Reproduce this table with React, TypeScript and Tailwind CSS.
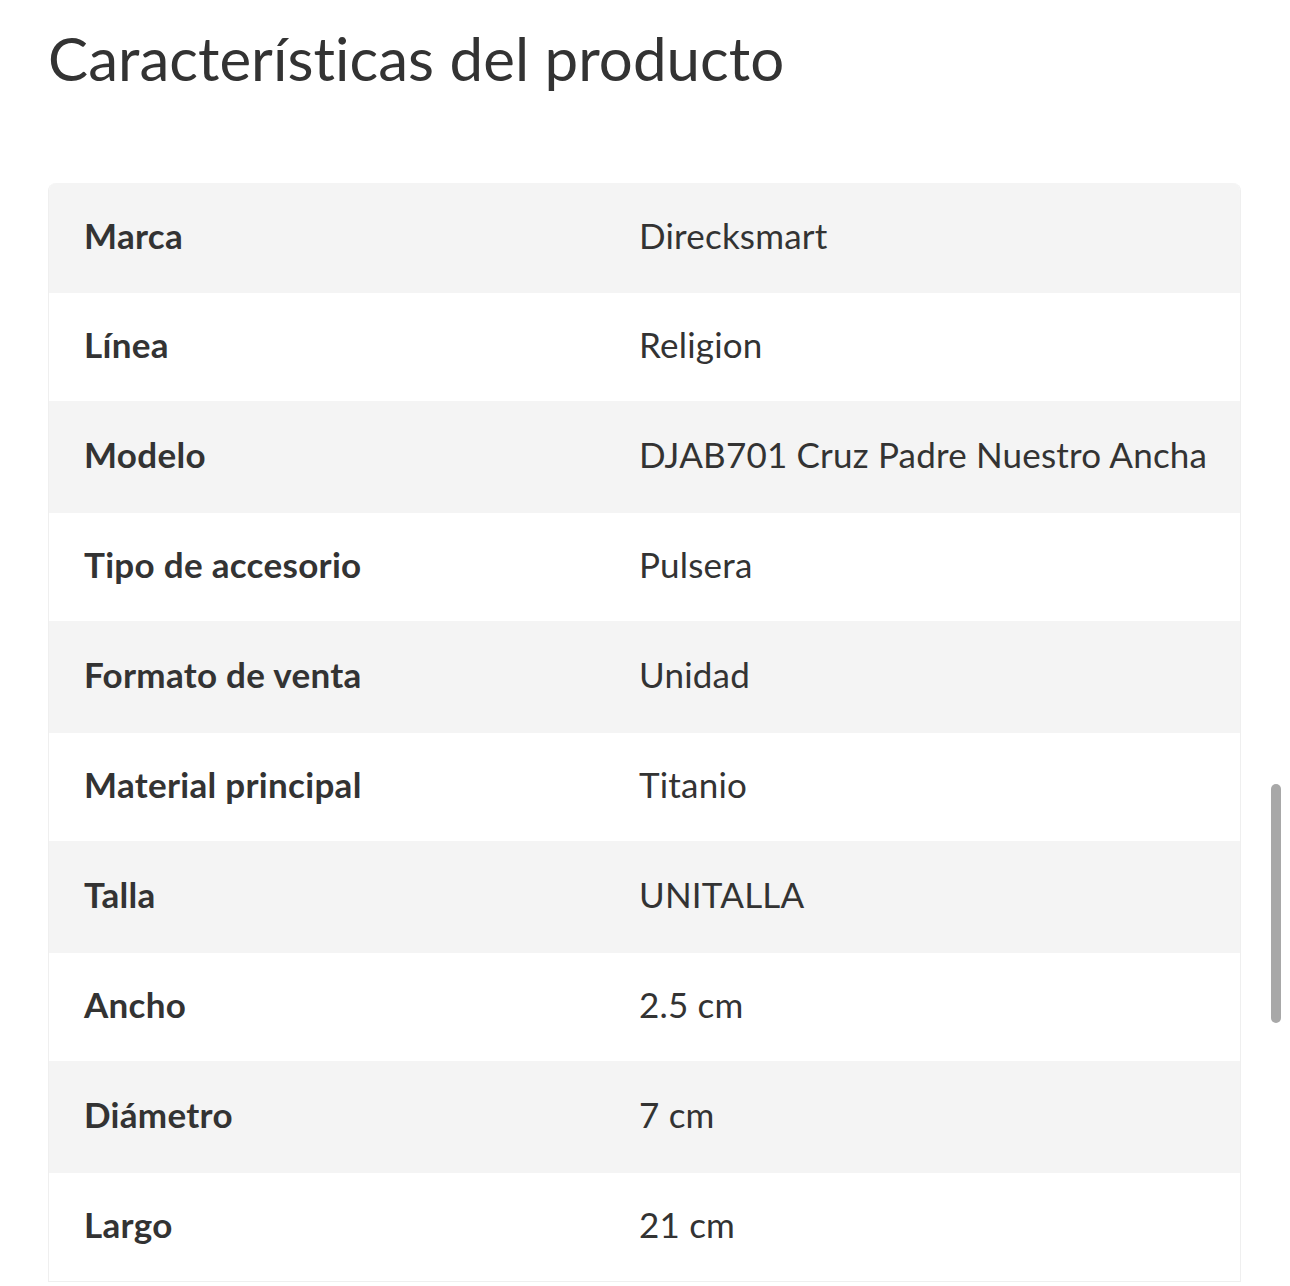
const rows: [string, string][] = [
  ["Marca", "Direcksmart"],
  ["Línea", "Religion"],
  ["Modelo", "DJAB701 Cruz Padre Nuestro Ancha"],
  ["Tipo de accesorio", "Pulsera"],
  ["Formato de venta", "Unidad"],
  ["Material principal", "Titanio"],
  ["Talla", "UNITALLA"],
  ["Ancho", "2.5 cm"],
  ["Diámetro", "7 cm"],
  ["Largo", "21 cm"],
];

export default function App() {
  return (
    <div className="relative h-[1286px] w-[1290px] overflow-hidden bg-white font-['Lato',sans-serif] text-[#333]">
      <div className="px-[48px] pt-[20px]">
        <h1 className="text-[60px] leading-[76px] font-normal tracking-[0.05px]">Características del producto</h1>
        <div className="mt-[87px] w-[1193px] overflow-hidden rounded-t-[8px] border-x border-b border-[#efefef]">
          {rows.map(([label, value], i) => (
            <div
              key={label}
              className={
                i === 0
                  ? "grid h-[110px] grid-cols-[555px_1fr] items-center bg-[#f4f4f4] pb-[6px]"
                  : i % 2 === 0
                    ? "grid h-[112px] grid-cols-[555px_1fr] items-center bg-[#f4f4f4] pb-[6px]"
                    : "grid h-[108px] grid-cols-[555px_1fr] items-center bg-white pb-[6px]"
              }
            >
              <div className="pl-[35px] text-[35px] font-bold tracking-[0.3px]">{label}</div>
              <div className="pl-[35px] text-[35px] tracking-[0.2px]">{value}</div>
            </div>
          ))}
        </div>
      </div>
      <div className="absolute left-[1271px] top-[784px] h-[239px] w-[10px] rounded-full bg-[#a8a8a8]" />
    </div>
  );
}
